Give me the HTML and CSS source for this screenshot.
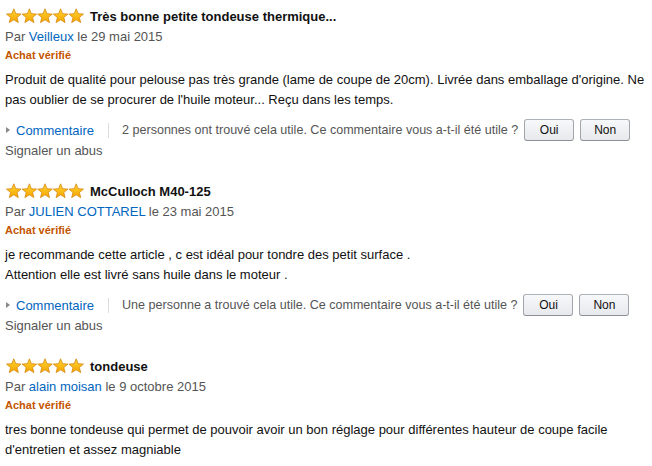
FILE: index.html
```html
<!DOCTYPE html>
<html lang="fr">
<head>
<meta charset="UTF-8">
<title>Commentaires clients</title>
<link rel="stylesheet" href="styles.css">
</head>
<body>
  <svg width="0" height="0" class="defs">
    <defs>
      <linearGradient id="starFill" x1="0" y1="0" x2="0" y2="1">
        <stop offset="0" stop-color="#FFD633"/>
        <stop offset="1" stop-color="#F6A300"/>
      </linearGradient>
      <polygon id="star" points="7.8,0.8 9.8,5.7 15.1,6.1 11,9.5 12.3,14.6 7.8,11.8 3.3,14.6 4.6,9.5 0.5,6.1 5.8,5.7" fill="url(#starFill)" stroke="#D5880E" stroke-width="0.8" stroke-linejoin="round"/>
    </defs>
  </svg>

  <div class="review">
    <div class="review-head">
      <svg class="stars" width="79" height="16" viewBox="0 0 79 16">
        <use href="#star" x="0"/><use href="#star" x="15.6"/><use href="#star" x="31.2"/><use href="#star" x="46.8"/><use href="#star" x="62.4"/>
      </svg>
      <span class="title">Très bonne petite tondeuse thermique...</span>
    </div>
    <div class="byline">Par <a href="#">Veilleux</a> le 29 mai 2015</div>
    <div class="verified">Achat vérifié</div>
    <div class="text">Produit de qualité pour pelouse pas très grande (lame de coupe de 20cm). Livrée dans emballage d'origine. Ne pas oublier de se procurer de l'huile moteur... Reçu dans les temps.</div>
    <div class="actions">
      <a href="#" class="comment">Commentaire</a>
      <span class="sep"></span>
      <span class="helpful">2 personnes ont trouvé cela utile. Ce commentaire vous a-t-il été utile ?</span>
      <button class="vote">Oui</button>
      <button class="vote">Non</button>
    </div>
    <div class="report">Signaler un abus</div>
  </div>

  <div class="review">
    <div class="review-head">
      <svg class="stars" width="79" height="16" viewBox="0 0 79 16">
        <use href="#star" x="0"/><use href="#star" x="15.6"/><use href="#star" x="31.2"/><use href="#star" x="46.8"/><use href="#star" x="62.4"/>
      </svg>
      <span class="title">McCulloch M40-125</span>
    </div>
    <div class="byline">Par <a href="#">JULIEN COTTAREL</a> le 23 mai 2015</div>
    <div class="verified">Achat vérifié</div>
    <div class="text">je recommande cette article , c est idéal pour tondre des petit surface .<br>Attention elle est livré sans huile dans le moteur .</div>
    <div class="actions">
      <a href="#" class="comment">Commentaire</a>
      <span class="sep"></span>
      <span class="helpful">Une personne a trouvé cela utile. Ce commentaire vous a-t-il été utile ?</span>
      <button class="vote">Oui</button>
      <button class="vote">Non</button>
    </div>
    <div class="report">Signaler un abus</div>
  </div>

  <div class="review">
    <div class="review-head">
      <svg class="stars" width="79" height="16" viewBox="0 0 79 16">
        <use href="#star" x="0"/><use href="#star" x="15.6"/><use href="#star" x="31.2"/><use href="#star" x="46.8"/><use href="#star" x="62.4"/>
      </svg>
      <span class="title">tondeuse</span>
    </div>
    <div class="byline">Par <a href="#">alain moisan</a> le 9 octobre 2015</div>
    <div class="verified">Achat vérifié</div>
    <div class="text">tres bonne tondeuse qui permet de pouvoir avoir un bon réglage pour différentes hauteur de coupe facile d'entretien et assez magniable</div>
  </div>
</body>
</html>
```

FILE: styles.css
```css
body {
    font-family: "Liberation Sans", Arial, sans-serif;
    font-size: 13px;
    color: #111;
    background-color: #fff;
    margin: 0;
    padding: 6px 5px 0 5px;
}
.defs {
    position: absolute;
}
a {
    color: #0066c0;
    text-decoration: none;
}
.review {
    margin-bottom: 20px;
}
.review-head {
    display: flex;
    align-items: center;
    height: 20px;
}
.stars {
    display: block;
    margin-left: 1px;
    margin-right: 5px;
}
.title {
    font-weight: bold;
    font-size: 13px;
    color: #111;
}
.byline {
    margin-top: 1px;
    line-height: 20px;
    color: #555;
}
.verified {
    font-size: 11px;
    font-weight: bold;
    color: #C45500;
    line-height: 16px;
}
.text {
    margin-top: 7px;
    line-height: 20px;
}
.actions {
    display: flex;
    align-items: center;
    height: 22px;
    margin-top: 9px;
}
.comment {
    display: flex;
    align-items: center;
    padding-left: 1px;
}
.comment::before {
    content: "";
    width: 0;
    height: 0;
    border-top: 3.5px solid transparent;
    border-bottom: 3.5px solid transparent;
    border-left: 4px solid #888;
    margin-right: 6px;
}
.sep {
    width: 1px;
    height: 15px;
    background-color: #ddd;
    margin: 0 13px 0 14px;
}
.helpful {
    font-size: 12.55px;
    color: #555;
}
.vote {
    font-family: "Liberation Sans", Arial, sans-serif;
    font-size: 12px;
    color: #111;
    width: 50px;
    height: 22px;
    margin-left: 6px;
    padding: 0;
    border: 1px solid #adb1b8;
    border-color: #adb1b8 #a2a6ac #8d9096;
    border-radius: 3px;
    background: linear-gradient(to bottom, #f7f8fa, #e7e9ec);
    cursor: pointer;
}
.report {
    line-height: 20px;
    color: #555;
}
```
